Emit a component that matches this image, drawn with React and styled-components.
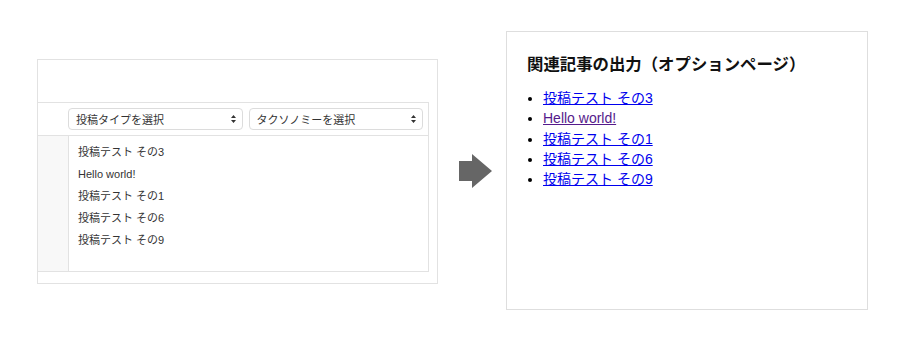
import React from 'react';
import styled, { createGlobalStyle } from 'styled-components';

const GlobalStyle = createGlobalStyle`
  body {
    margin: 0;
    background: #fff;
    font-family: "Liberation Sans", "Noto Sans CJK JP", sans-serif;
  }
`;

const Stage = styled.div`
  height: 341px;
  display: flex;
  align-items: center;
  padding-left: 37px;
`;

const AdminPanel = styled.div`
  box-sizing: border-box;
  width: 401px;
  height: 225px;
  border: 1px solid #e2e2e2;
  padding-top: 42px;
  margin-top: 1px;
`;

const MetaBox = styled.div`
  width: 391px;
  height: 170px;
  box-sizing: border-box;
  border: 1px solid #e2e2e2;
  border-left: none;
  display: flex;
  flex-direction: column;
`;

const Toolbar = styled.div`
  height: 33px;
  box-sizing: border-box;
  border-bottom: 1px solid #e2e2e2;
  display: flex;
  align-items: center;
  gap: 6px;
  padding: 0 5px 0 30px;
`;

const SelectBox = styled.div`
  flex: 1;
  height: 22px;
  box-sizing: border-box;
  border: 1px solid #dcdcdc;
  border-radius: 4px;
  background: #fff;
  display: flex;
  align-items: center;
  justify-content: space-between;
  padding: 0 5px 0 7px;
  font-size: 11px;
  color: #333;
`;

const Body = styled.div`
  flex: 1;
  display: flex;
`;

const Sidebar = styled.div`
  width: 30px;
  background: #f8f8f8;
  border-right: 1px solid #e2e2e2;
`;

const PostList = styled.ul`
  list-style: none;
  margin: 0;
  padding: 5px 0 0 9px;
`;

const PostItem = styled.li`
  font-size: 11px;
  line-height: 22px;
  color: #333;
`;

const Arrow = styled.svg`
  margin-left: 21px;
  margin-right: 14px;
  margin-top: 2px;
  flex-shrink: 0;
`;

const OutputPanel = styled.div`
  box-sizing: border-box;
  width: 362px;
  height: 279px;
  border: 1px solid #dedede;
  padding: 17px 20px;
`;

const Heading = styled.h2`
  margin: 0 0 9px;
  font-size: 16.4px;
  font-weight: bold;
  line-height: 30px;
  color: #111;
`;

const LinkList = styled.ul`
  margin: 0;
  padding-left: 16px;
  font-size: 14px;
  line-height: 20.3px;
`;

const LinkItem = styled.li`
  a {
    color: ${(p) => (p.$visited ? '#551a8b' : '#0000ee')};
    text-decoration: underline;
  }
`;

const Stepper = () => (
  <svg width="7" height="10" viewBox="0 0 7 10">
    <path d="M3.5 1 L6 4 H1 Z M3.5 9 L6 6 H1 Z" fill="#333" />
  </svg>
);

const posts = [
  { title: '投稿テスト その3' },
  { title: 'Hello world!', visited: true },
  { title: '投稿テスト その1' },
  { title: '投稿テスト その6' },
  { title: '投稿テスト その9' },
];

function App() {
  return (
    <>
      <GlobalStyle />
      <Stage>
        <AdminPanel>
          <MetaBox>
            <Toolbar>
              <SelectBox>
                <span>投稿タイプを選択</span>
                <Stepper />
              </SelectBox>
              <SelectBox>
                <span>タクソノミーを選択</span>
                <Stepper />
              </SelectBox>
            </Toolbar>
            <Body>
              <Sidebar />
              <PostList>
                {posts.map((p) => (
                  <PostItem key={p.title}>{p.title}</PostItem>
                ))}
              </PostList>
            </Body>
          </MetaBox>
        </AdminPanel>

        <Arrow width="33" height="35" viewBox="0 0 33 35">
          <polygon points="0,7 13,7 13,0 33,17 13,34 13,27 0,27" fill="#666" />
        </Arrow>

        <OutputPanel>
          <Heading>関連記事の出力（オプションページ）</Heading>
          <LinkList>
            {posts.map((p) => (
              <LinkItem key={p.title} $visited={p.visited}>
                <a href="#">{p.title}</a>
              </LinkItem>
            ))}
          </LinkList>
        </OutputPanel>
      </Stage>
    </>
  );
}

export default App;
